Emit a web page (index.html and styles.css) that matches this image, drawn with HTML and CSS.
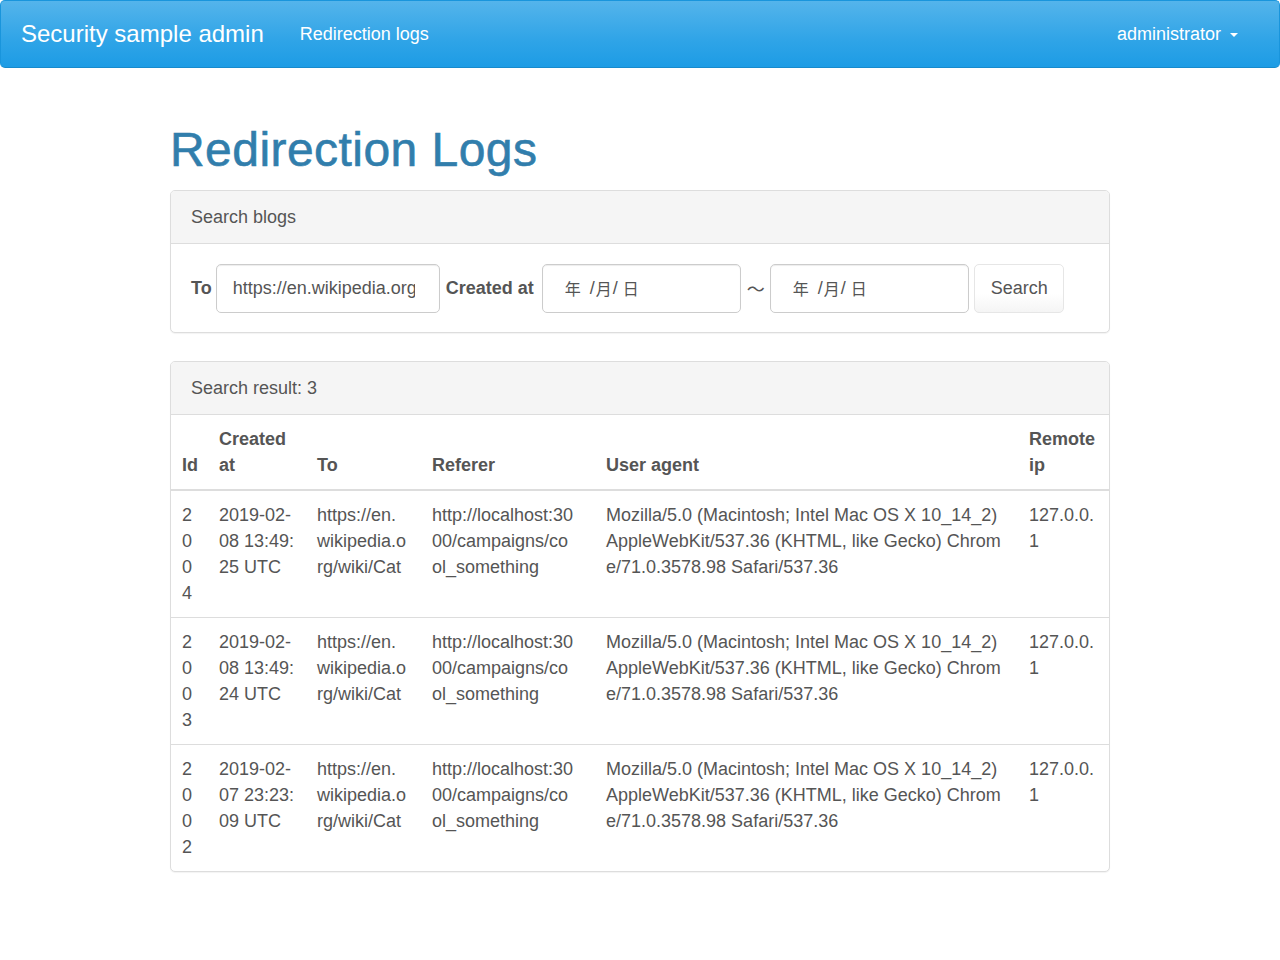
FILE: index.html
```html
<!DOCTYPE html>
<html lang="en">
<head>
<meta charset="utf-8">
<title>Redirection Logs</title>
<link rel="stylesheet" href="styles.css">
</head>
<body>
<nav class="navbar">
  <span class="brand">Security sample admin</span>
  <span class="nav-link">Redirection logs</span>
  <span class="nav-user">administrator <span class="caret"></span></span>
</nav>
<main class="container">
  <h1 class="page-title">Redirection Logs</h1>
  <section class="panel">
    <div class="panel-heading">Search blogs</div>
    <div class="panel-body">
      <form class="search-form">
        <label class="form-label">To</label>
        <input class="form-input to-input" type="text" value="https://en.wikipedia.org/wiki/Cat">
        <label class="form-label label-created">Created at</label>
        <div class="form-input date-input"><span class="seg">年</span><span class="sep sep-first">/</span><span class="seg">月</span><span class="sep sep-second">/</span><span class="seg">日</span></div>
        <span class="tilde">〜</span>
        <div class="form-input date-input"><span class="seg">年</span><span class="sep sep-first">/</span><span class="seg">月</span><span class="sep sep-second">/</span><span class="seg">日</span></div>
        <button class="btn" type="button">Search</button>
      </form>
    </div>
  </section>
  <section class="panel">
    <div class="panel-heading">Search result: 3</div>
    <table class="log-table">
      <thead>
        <tr>
          <th class="col-id">Id</th>
          <th class="col-created">Created at</th>
          <th class="col-to">To</th>
          <th class="col-referer">Referer</th>
          <th class="col-ua">User agent</th>
          <th class="col-ip">Remote ip</th>
        </tr>
      </thead>
      <tbody>
        <tr>
          <td>2004</td>
          <td>2019-02-08 13:49:25 UTC</td>
          <td>https://en.wikipedia.org/wiki/Cat</td>
          <td>http://localhost:3000/campaigns/cool_something</td>
          <td>Mozilla/5.0 (Macintosh; Intel Mac OS X 10_14_2) AppleWebKit/537.36 (KHTML, like Gecko) Chrome/71.0.3578.98 Safari/537.36</td>
          <td>127.0.0.1</td>
        </tr>
        <tr>
          <td>2003</td>
          <td>2019-02-08 13:49:24 UTC</td>
          <td>https://en.wikipedia.org/wiki/Cat</td>
          <td>http://localhost:3000/campaigns/cool_something</td>
          <td>Mozilla/5.0 (Macintosh; Intel Mac OS X 10_14_2) AppleWebKit/537.36 (KHTML, like Gecko) Chrome/71.0.3578.98 Safari/537.36</td>
          <td>127.0.0.1</td>
        </tr>
        <tr>
          <td>2002</td>
          <td>2019-02-07 23:23:09 UTC</td>
          <td>https://en.wikipedia.org/wiki/Cat</td>
          <td>http://localhost:3000/campaigns/cool_something</td>
          <td>Mozilla/5.0 (Macintosh; Intel Mac OS X 10_14_2) AppleWebKit/537.36 (KHTML, like Gecko) Chrome/71.0.3578.98 Safari/537.36</td>
          <td>127.0.0.1</td>
        </tr>
      </tbody>
    </table>
  </section>
</main>
</body>
</html>
```

FILE: styles.css
```css
* {
  box-sizing: border-box;
}

html,
body {
  margin: 0;
}

body {
  font-family: "Liberation Sans", Arial, "Noto Sans CJK JP", sans-serif;
  font-size: 18px;
  line-height: 26px;
  color: #555555;
  background: #ffffff;
}

/* Navbar */
.navbar {
  display: flex;
  align-items: center;
  height: 68px;
  padding: 0 41px 0 20px;
  color: #ffffff;
  background-image: linear-gradient(#54b4eb, #2fa4e7 60%, #1d9ce5);
  border: 1px solid #1995dc;
  border-bottom-color: #178acc;
  border-radius: 5px;
}

.brand {
  font-size: 24px;
  line-height: 26px;
}

.nav-link {
  margin-left: 36px;
}

.nav-user {
  margin-left: auto;
  display: flex;
  align-items: center;
  gap: 9px;
}

.caret {
  width: 0;
  height: 0;
  margin-top: 1px;
  border-top: 4px solid #ffffff;
  border-left: 4px solid transparent;
  border-right: 4px solid transparent;
}

/* Page */
.container {
  width: 940px;
  margin: 0 auto;
}

.page-title {
  margin: 56px 0 13px;
  font-size: 48px;
  line-height: 1.1;
  font-weight: 400;
  letter-spacing: 0.45px;
  color: #317eac;
  -webkit-text-stroke: 0.6px #317eac;
}

.panel {
  margin-bottom: 28px;
  background: #ffffff;
  border: 1px solid #dddddd;
  border-radius: 5px;
  box-shadow: 0 1px 1px rgba(0, 0, 0, 0.05);
  overflow: hidden;
}

.panel-heading {
  padding: 13px 20px;
  background: #f5f5f5;
  border-bottom: 1px solid #dddddd;
}

.panel-body {
  padding: 20px 20px 19px;
}

/* Search form */
.search-form {
  display: flex;
  align-items: center;
  gap: 4px;
}

.form-label {
  font-weight: bold;
}

.label-created {
  margin-left: 2px;
  margin-right: 4px;
}

.form-input {
  height: 49px;
  padding: 0 16px;
  font: inherit;
  color: #555555;
  background: #ffffff;
  border: 1px solid #cccccc;
  border-radius: 5px;
  box-shadow: inset 0 1px 1px rgba(0, 0, 0, 0.075);
}

.to-input {
  width: 224px;
  padding-right: 24px;
}

.date-input {
  width: 199px;
  display: flex;
  align-items: center;
  padding-left: 22px;
}

.seg {
  font-family: "Noto Sans CJK JP", sans-serif;
  font-size: 16px;
}

.sep {
  font-size: 18px;
}

.sep-first {
  margin-left: 9px;
  margin-right: 1px;
}

.sep-second {
  margin-left: 1px;
  margin-right: 5px;
}

.tilde {
  padding: 0 1px 0 2px;
  font-family: "Noto Sans CJK JP", sans-serif;
}

.btn {
  width: 90px;
  height: 49px;
  margin-left: 1px;
  padding: 0 16px;
  font: inherit;
  color: #555555;
  background-image: linear-gradient(#ffffff, #ffffff 60%, #f5f5f5);
  border: 1px solid #e6e6e6;
  border-radius: 5px;
}

/* Table */
.log-table {
  width: 100%;
  border-collapse: collapse;
  table-layout: fixed;
}

.log-table th,
.log-table td {
  padding: 11px 10px;
  text-align: left;
}

.log-table th {
  vertical-align: bottom;
  font-weight: bold;
  border-bottom: 2px solid #dddddd;
}

.log-table td {
  vertical-align: top;
  word-break: break-all;
  border-top: 1px solid #dddddd;
}

.log-table th:nth-child(1),
.log-table td:nth-child(1) {
  padding-left: 11px;
  padding-right: 9px;
}

.log-table th:nth-child(3),
.log-table td:nth-child(3) {
  padding-right: 14px;
}

.log-table th:nth-child(4),
.log-table td:nth-child(4) {
  padding-right: 20px;
}

.log-table th:nth-child(5),
.log-table td:nth-child(5) {
  padding-right: 13px;
}

.col-id { width: 38px; }
.col-created { width: 98px; }
.col-to { width: 115px; }
.col-referer { width: 174px; }
.col-ua { width: 423px; }
.col-ip { width: 90px; }
```
